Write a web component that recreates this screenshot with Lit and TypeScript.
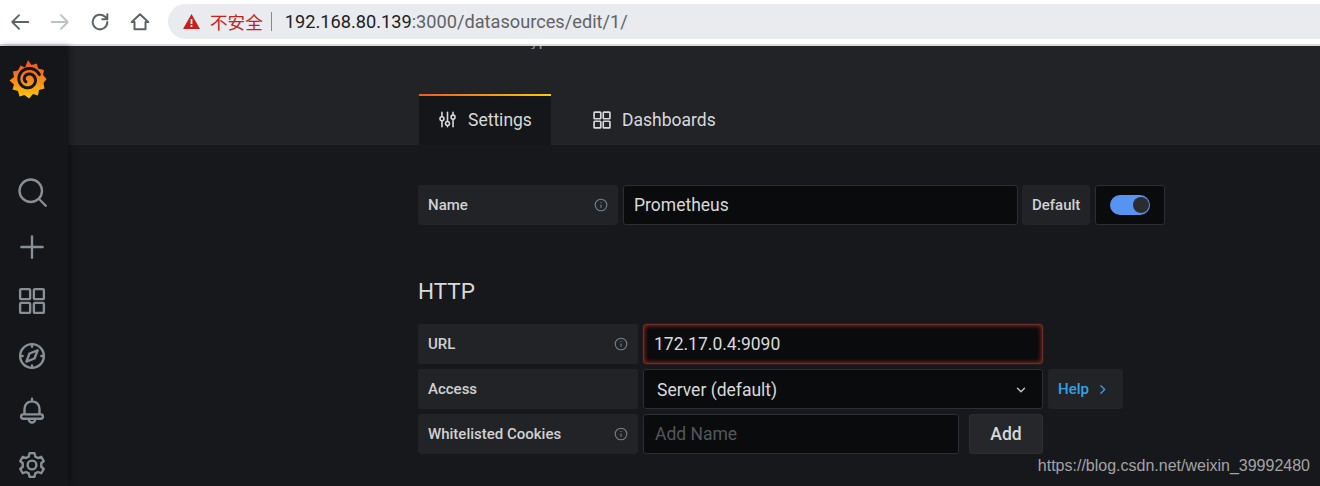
import { LitElement, html, css, svg } from "lit";
import { customElement } from "lit/decorators.js";

const stroke = (c: unknown, size = 24, w = 2, color = "currentColor") => html`<svg width=${size} height=${size} viewBox="0 0 24 24" fill="none" stroke=${color} stroke-width=${w} stroke-linecap="round" stroke-linejoin="round">${c}</svg>`;

const info = html`<svg class="info" width="14" height="14" viewBox="0 0 14 14" fill="none" stroke="#7b8087" stroke-width="1.1"><circle cx="7" cy="7" r="5.8"/><path d="M7 6.4v3.4M7 4v1"/></svg>`;

const grid = svg`<rect x="2.500" y="2.500" width="8" height="8" rx=".8"/><rect x="13.500" y="2.500" width="8" height="8" rx=".8"/><rect x="2.500" y="13.500" width="8" height="8" rx=".8"/><rect x="13.500" y="13.500" width="8" height="8" rx=".8"/>`;

const spiral = (() => {
  const pts: string[] = [];
  const turns = 1.55;
  for (let i = 0; i <= 60; i++) {
    const t = i / 60;
    const a = (-25 - t * turns * 360) * Math.PI / 180;
    const r = 12 - t * 8.500;
    pts.push(`${(19.500 + r * Math.cos(a)).toFixed(2)},${(20.500 + r * Math.sin(a)).toFixed(2)}`);
  }
  return pts.join(" ");
})();

const logo = html`<svg width="38" height="40" viewBox="0 0 38 40">
  <defs><linearGradient id="lg" x1="0" y1="1" x2="0" y2="0"><stop offset="0" stop-color="#fbca0a"/><stop offset=".6" stop-color="#f4791f"/><stop offset="1" stop-color="#ec4f25"/></linearGradient></defs>
  <path fill="url(#lg)" d="M19 1l3.500 5 5.500-1.500 1 5 6 1.500-1 5 3.500 4-3 4 1 5.500-5.500 1.500-1 5.500-5-1.500-4 4.500-4.500-3.500-5 1.500-1.500-5.500-5.500-1.500 1.500-5-4.500-4 4.500-3.500-1-5.500 5-1 2.500-5 4.500 2z"/>
  <polyline points=${spiral} fill="none" stroke="#15171a" stroke-width="3" stroke-linecap="round"/>
</svg>`;

@customElement("app-root")
export class AppRoot extends LitElement {
  static styles = css`
    :host { display: block; width: 1320px; height: 486px; overflow: hidden; position: relative; font-family: Roboto, "Noto Sans", sans-serif; background: #16181c; color: #d8d9da; }
    .chrome { background: #fff; display: flex; align-items: center; border-bottom: 2px solid #dcdcdc; padding-bottom: 1px; box-sizing: border-box; height: 46px; }
    .nav { display: flex; align-items: center; width: 168px; flex: none; color: #5f6368; padding-left: 9px; box-sizing: border-box; gap: 18px; }
    .nav .off { color: #bdc1c6; display: flex; }
    .omni { flex: 1; height: 35px; border-radius: 18px 0 0 18px; background: #e9ebee; display: flex; align-items: center; padding-left: 15px; font-size: 18.200px; }
    .warn { color: #c5221f; font-family: "Noto Sans CJK SC", sans-serif; font-size: 17.600px; margin-left: 10px; }
    .bar { width: 1px; height: 19px; background: #888; margin: 0 13px 0 8px; }
    .host { color: #202124; }
    .path { color: #5f6368; }
    .app { display: flex; height: 440px; }
    .side { width: 68px; flex: none; background: #141619; display: flex; flex-direction: column; align-items: center; color: #8a8f96; box-shadow: 2px 0 6px rgba(0,0,0,.35); z-index: 1; }
    .logo { height: 40px; margin-top: 13px; margin-bottom: 78px; margin-left: -13px; }
    .side-items { display: flex; flex-direction: column; gap: 24.600px; align-items: center; margin-left: -4px; }
    .side-items svg { display: block; }
    .main { flex: 1; min-width: 0; }
    .head { height: 99px; background: #212327; display: flex; align-items: flex-end; padding-left: 351px; position: relative; overflow: hidden; }
    .ghost { position: absolute; left: 462px; top: 0; height: 3px; overflow: hidden; font-size: 18px; color: #8e8e8e; }
    .ghost span { display: block; margin-top: -17px; line-height: 21px; }
    .tab { height: 51px; box-sizing: border-box; display: flex; align-items: center; gap: 11px; font-size: 17.500px; color: #d8d9da; }
    .tab.on { width: 132px; background: #141619; padding: 0 0 0 19px; position: relative; }
    .tab.on::before { content: ""; position: absolute; left: 0; right: 0; top: 0; height: 2px; background: linear-gradient(90deg, #f05a28, #fbca0a); }
    .tab.off { margin-left: 41px; gap: 10px; }
    .form { padding: 40px 0 0 350px; display: flex; flex-direction: column; }
    .row { display: flex; height: 40px; align-items: stretch; }
    .rows { display: flex; flex-direction: column; gap: 5px; }
    .label { background: #212327; border-radius: 3px; display: flex; align-items: center; justify-content: space-between; padding: 0 10px 0 10px; box-sizing: border-box; font-size: 15px; font-weight: 500; color: #d0d1d3; }
    .w200 { width: 200px; } .w220 { width: 220px; }
    .label.auto { width: 68px; margin-left: 4px; padding: 0 0 0 10px; }
    .input { background: #0a0b0d; border: 1px solid #2c2e33; border-radius: 3px; box-sizing: border-box; display: flex; align-items: center; font-size: 17.500px; color: #d8d9da; padding-left: 10px; margin-left: 5px; }
    .name { width: 395px; }
    .sw { width: 70px; margin-left: 5px; padding-left: 14px; }
    .toggle { width: 40px; height: 20px; border-radius: 10px; background: #5794f2; position: relative; }
    .toggle::after { content: ""; position: absolute; right: 1px; top: 2px; width: 16px; height: 16px; border-radius: 50%; background: #2a2c30; }
    h2 { margin: 54px 0 21px; font-size: 22.500px; line-height: 24px; font-weight: 400; color: #d8d9da; height: 24px; }
    .url { width: 400px; border-color: #6b3029; box-shadow: inset 0 0 5px rgba(224, 60, 40, .75), 0 0 2px rgba(224,60,40,.3); }
    .access { width: 400px; padding-left: 13px; justify-content: space-between; padding-right: 14px; padding-top: 1px; }
    .access svg { color: #c7c8ca; }
    .cookie { width: 316px; padding-left: 11px; color: #54575c; }
    .add { margin-left: 10px; width: 74px; background: #25272b; border: 1px solid #2c2e33; border-radius: 3px; box-sizing: border-box; display: flex; align-items: center; justify-content: center; font-size: 17.500px; font-weight: 500; color: #d8d9da; }
    .help { margin-left: 5px; width: 75px; background: #212327; border-radius: 3px; display: flex; align-items: center; padding-left: 10px; box-sizing: border-box; gap: 7px; font-size: 15px; font-weight: 500; color: #33a2e5; }
    .wm { position: absolute; right: 10px; top: 457px; font-family: "Liberation Sans", sans-serif; font-size: 16px; line-height: 18px; color: #a3a4a5; }
  `;

  render() {
    return html`
      <div class="chrome">
        <div class="nav">
          ${stroke(svg`<path d="M21 12H3.500M11 4.500L3.500 12l7.500 7.500"/>`, 22, 2)}
          <span class="off">${stroke(svg`<path d="M3 12h17.500M13 4.500l7.500 7.500-7.500 7.500"/>`, 22, 2)}</span>
          ${stroke(svg`<path d="M20 12a8 8 0 1 1-2.500-5.800L20 9M20 3.500V9h-5.500"/>`, 22, 2.200)}
          ${stroke(svg`<path d="M12 3.500L21 12h-3v8H6v-8H3z"/>`, 22, 2.200)}
        </div>
        <div class="omni">
          <svg width="17" height="15" viewBox="0 0 17 15"><path fill="#c5221f" d="M8.500 0L17 15H0z"/><path stroke="#fff" stroke-width="1.700" d="M8.500 5v5M8.500 11v2"/></svg>
          <span class="warn">不安全</span><span class="bar"></span>
          <span class="host">192.168.80.139</span><span class="path">:3000/datasources/edit/1/</span>
        </div>
      </div>
      <div class="app">
        <nav class="side">
          <div class="logo">${logo}</div>
          <div class="side-items">
            ${stroke(svg`<circle cx="11" cy="11" r="9"/><path d="M18 18l5 5"/>`, 30, 1.900)}
            ${stroke(svg`<path d="M12 3.500v17M3.500 12h17"/>`, 30, 1.900)}
            ${stroke(grid, 30, 1.900)}
            ${stroke(svg`<circle cx="12" cy="12" r="9.500"/><path d="M16.500 7.500L14 14l-6.500 2.500L10 10z"/><path d="M12 2.500v2M12 19.500v2M2.500 12h2M19.500 12h2"/>`, 30, 1.900)}
            ${stroke(svg`<path d="M6 15.500V11a6 6 0 0 1 12 0v4.500M12 3v2M5 15.500h14a1.500 1.500 0 0 1 0 3.500H5a1.500 1.500 0 0 1 0-3.500zM9.500 19.500a2.500 2.500 0 0 0 5 0"/>`, 30, 1.900)}
            ${stroke(svg`<circle cx="12" cy="12" r="3.500"/><path d="M10 2.500h4l.6 2.800 2.200 1.100 2.600-1 2 3.400-2 1.800v2.800l2 1.800-2 3.400-2.600-1-2.200 1.100-.6 2.800h-4l-.6-2.800-2.200-1.100-2.600 1-2-3.400 2-1.800v-2.800l-2-1.800 2-3.400 2.600 1 2.200-1.100z"/>`, 30, 1.900)}
          </div>
        </nav>
        <main class="main">
          <header class="head">
            <div class="ghost"><span>yp</span></div>
            <div class="tab on">${stroke(svg`<path d="M5 3v5M5 14v7M12 3v11M12 20v1M19 3v3M19 12v9"/><circle cx="5" cy="11" r="2.500"/><circle cx="12" cy="17" r="2.500"/><circle cx="19" cy="9" r="2.500"/>`, 19, 2)}Settings</div>
            <div class="tab off">${stroke(grid, 20, 2)}Dashboards</div>
          </header>
          <section class="form">
            <div class="row">
              <div class="label w200">Name ${info}</div>
              <div class="input name">Prometheus</div>
              <div class="label auto">Default</div>
              <div class="input sw"><div class="toggle"></div></div>
            </div>
            <h2>HTTP</h2>
            <div class="rows">
              <div class="row"><div class="label w220">URL ${info}</div><div class="input url">172.17.0.4:9090</div></div>
              <div class="row"><div class="label w220">Access</div><div class="input access">Server (default)${stroke(svg`<path d="M6 9l6 6 6-6"/>`, 14, 2.400)}</div><div class="help">Help ${stroke(svg`<path d="M9 5l7 7-7 7"/>`, 13, 2.400)}</div></div>
              <div class="row"><div class="label w220">Whitelisted Cookies ${info}</div><div class="input cookie">Add Name</div><div class="add">Add</div></div>
            </div>
          </section>
        </main>
      </div>
      <div class="wm">https://blog.csdn.net/weixin_39992480</div>
    `;
  }
}
